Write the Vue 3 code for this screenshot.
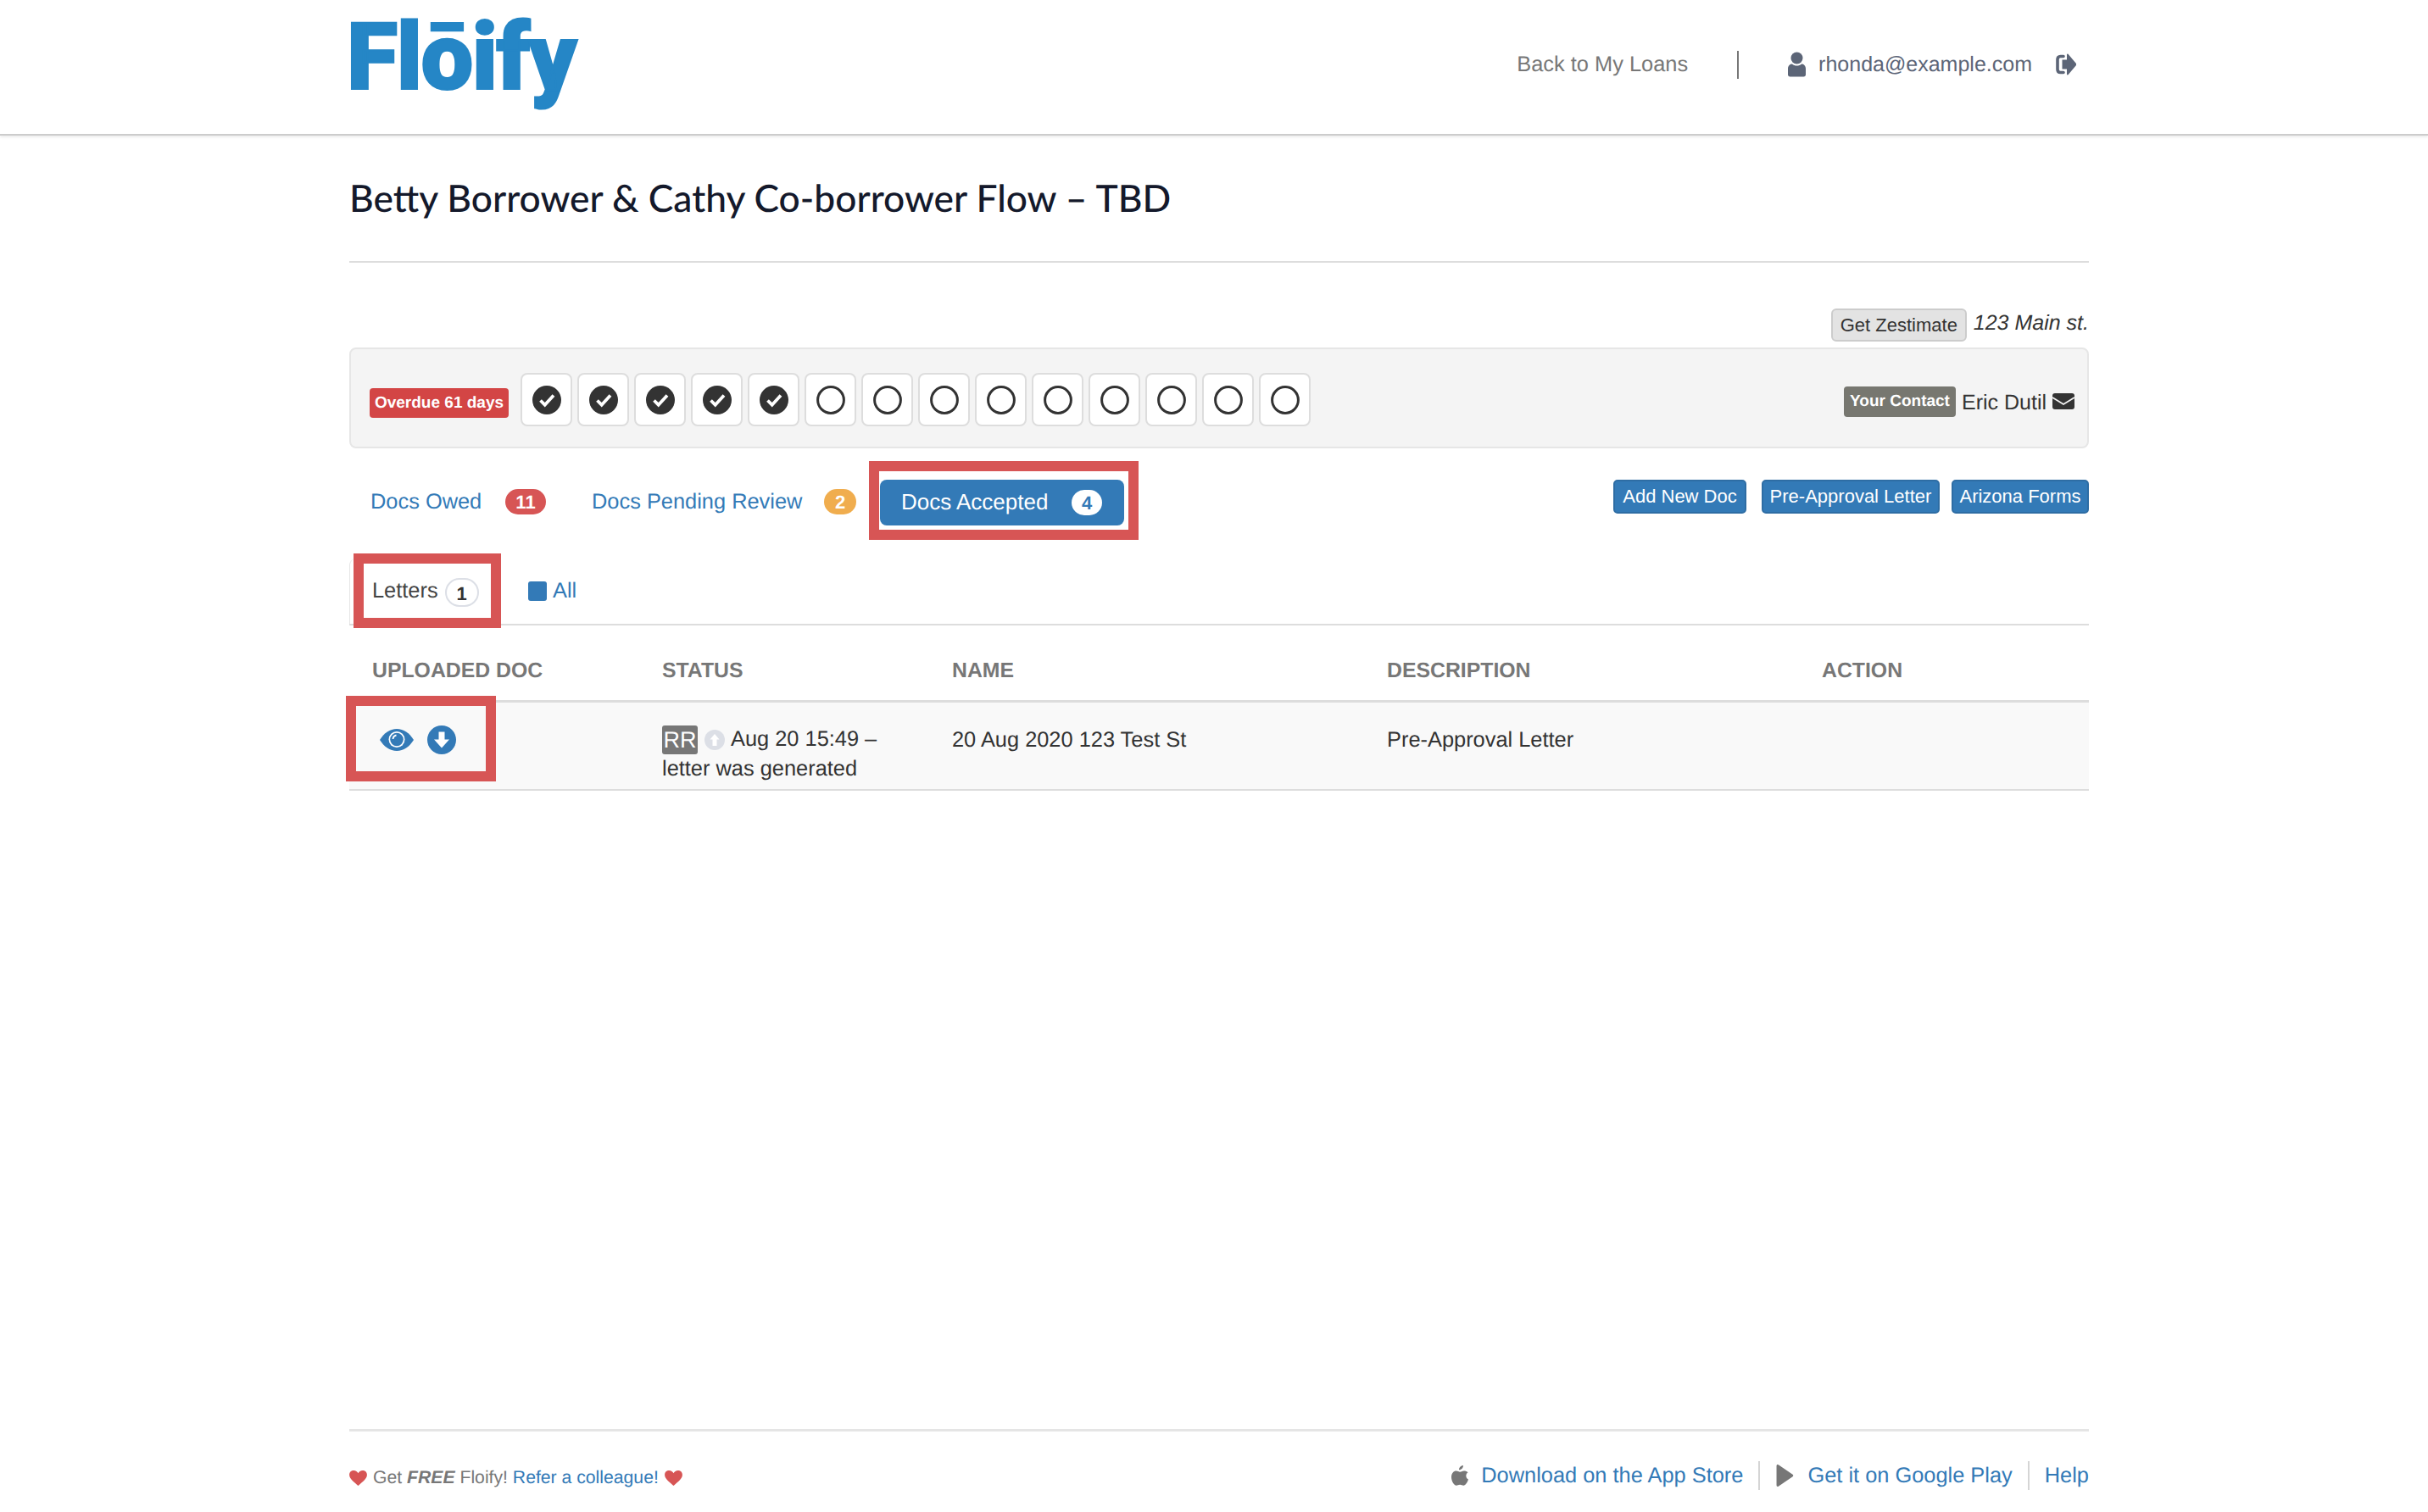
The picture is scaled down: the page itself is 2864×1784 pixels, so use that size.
<script setup>
const steps = Array.from({ length: 14 }, (_, i) => i < 5)
const tabs = [
  { label: 'Docs Owed', count: '11', tone: 'red' },
  { label: 'Docs Pending Review', count: '2', tone: 'orange' }
]
const actions = ['Add New Doc', 'Pre-Approval Letter', 'Arizona Forms']
</script>

<template>
  <div class="page">
    <header class="topbar">
      <div class="wrap topbar-inner">
        <span class="logo">Flōify</span>
        <nav class="topnav">
          <a class="back">Back to My Loans</a>
          <span class="nav-sep"></span>
          <svg class="user" viewBox="0 0 21 30"><circle cx="10.5" cy="7.500" r="7" fill="#5c6577"/><path d="M0 27V20c0-3.500 2.500-5.500 5-5.500 1.500 1.500 3.500 2 5.500 2s4-.5 5.500-2c2.500 0 5 2 5 5.500v7c0 1.500-1 2.500-2.500 2.500H2.500C1 29.500 0 28.500 0 27z" fill="#5c6577"/></svg>
          <span class="email">rhonda@example.com</span>
          <svg class="logout" viewBox="0 0 24 26"><path d="M9 3.500H5.500C3 3.500 2 5 2 7v12c0 2 1 3.500 3.500 3.500H9" fill="none" stroke="#5c6577" stroke-width="3.600" stroke-linecap="round"/><path d="M13 1.500c0-1 1-1.300 1.700-.6L24 12c.6.600.6 1.400 0 2L14.700 25.100c-.7.700-1.700.4-1.700-.6V18.500H7.500V7.500H13z" fill="#5c6577"/></svg>
        </nav>
      </div>
    </header>

    <main class="wrap">
      <h1 class="title">Betty Borrower &amp; Cathy Co-borrower Flow – TBD</h1>
      <hr class="rule" />

      <div class="address">
        <button class="zest">Get Zestimate</button>
        <em class="street">123 Main st.</em>
      </div>

      <section class="panel">
        <span class="overdue">Overdue 61 days</span>
        <ul class="steps">
          <li v-for="(done, i) in steps" :key="i" class="step">
            <svg viewBox="0 0 34 34" class="step-icon">
              <template v-if="done">
                <circle cx="17" cy="17" r="17" fill="#333"/>
                <path d="M9.500 17.500l5.200 5.200L25 11.500" fill="none" stroke="#fff" stroke-width="3.800"/>
              </template>
              <circle v-else cx="17" cy="17" r="15.400" fill="#fff" stroke="#333" stroke-width="3"/>
            </svg>
          </li>
        </ul>
        <div class="contact">
          <span class="contact-tag">Your Contact</span>
          <span class="contact-name">Eric Dutil</span>
          <svg class="mail" viewBox="0 0 26 19"><rect width="26" height="19" rx="3" fill="#333"/><path d="M0 5l13 8 13-8" fill="none" stroke="#f5f5f5" stroke-width="1.800"/></svg>
        </div>
      </section>

      <div class="docbar">
        <a v-for="t in tabs" :key="t.label" class="doctab">
          <span class="doctab-label">{{ t.label }}</span><span class="count" :class="t.tone">{{ t.count }}</span>
        </a>
        <div class="mark-accepted">
          <a class="pill"><span class="pill-label">Docs Accepted</span><span class="count white">4</span></a>
        </div>
        <div class="actions">
          <button v-for="a in actions" :key="a" class="action">{{ a }}</button>
        </div>
      </div>

      <div class="subtabs">
        <div class="subtab-edge">
          <div class="mark-letters">
            Letters<span class="count-outline">1</span>
          </div>
        </div>
        <a class="all"><span class="all-box"></span>All</a>
      </div>

      <table class="docs">
        <colgroup>
          <col class="c1" /><col class="c1" /><col class="c2" /><col class="c2" /><col class="c1" />
        </colgroup>
        <thead>
          <tr>
            <th>UPLOADED DOC</th><th>STATUS</th><th>NAME</th><th>DESCRIPTION</th><th>ACTION</th>
          </tr>
        </thead>
        <tbody>
          <tr>
            <td class="uploaded">
              <span class="mark-icons"></span>
              <span class="doc-icons">
                <svg class="eye" viewBox="0 0 40 26">
                  <path d="M0 13C5 5 12 0 20 0s15 5 20 13c-5 8-12 13-20 13S5 21 0 13z" fill="#337ab7"/>
                  <circle cx="20" cy="12.500" r="9.500" fill="#fff"/>
                  <circle cx="20" cy="12.500" r="7.800" fill="#337ab7"/>
                  <path d="M15.500 12a5 5 0 0 1 4-4.500" fill="none" stroke="#fff" stroke-width="1.800"/>
                </svg>
                <svg class="down" viewBox="0 0 34 34">
                  <circle cx="17" cy="17" r="17" fill="#337ab7"/>
                  <path d="M13.500 7.500h7v9H26L17 26.500 8 16.500h5.500z" fill="#fff"/>
                </svg>
              </span>
            </td>
            <td class="status">
              <div class="status-line">
                <span class="initials">RR</span>
                <svg class="up" viewBox="0 0 24 24"><circle cx="12" cy="12" r="12" fill="#dcdfe6"/><path d="M12 5l5.500 6.500H14.500V19h-5v-7.500H6.500z" fill="#fff"/></svg>
                <span>Aug 20 15:49 –</span>
              </div>
              <div>letter was generated</div>
            </td>
            <td>20 Aug 2020 123 Test St</td>
            <td>Pre-Approval Letter</td>
            <td></td>
          </tr>
        </tbody>
      </table>
    </main>

    <footer class="wrap footer">
      <div class="refer">
        <svg class="heart" viewBox="0 0 22 19"><path d="M11 19C8 16 0 11 0 5.500 0 2 2.500 0 5.500 0 8 0 10 1.500 11 3.500 12 1.500 14 0 16.500 0 19.500 0 22 2 22 5.500 22 11 14 16 11 19z" fill="#d75555"/></svg>
        <span>Get <b><i>FREE</i></b> Floify! <a>Refer a colleague!</a></span>
        <svg class="heart" viewBox="0 0 22 19"><path d="M11 19C8 16 0 11 0 5.500 0 2 2.500 0 5.500 0 8 0 10 1.500 11 3.500 12 1.500 14 0 16.500 0 19.500 0 22 2 22 5.500 22 11 14 16 11 19z" fill="#d75555"/></svg>
      </div>
      <div class="stores">
        <svg class="apple" viewBox="0 0 20 24"><path d="M14 0c.2 2.800-2.300 5.500-5 5.300C8.800 2.700 11.300.2 14 0zM19.600 8.200c-3.200 2-2.800 6.800.4 8.300-1 3-3.200 7.300-5.700 7.300-1.600 0-2.400-1-4.200-1s-2.700 1-4.200 1C3 23.800 0 18.500 0 13.800 0 9.200 2.800 6.500 5.700 6.500c1.800 0 3.200 1.200 4.400 1.200 1.100 0 2.700-1.300 4.800-1.300 1.800 0 3.500 .6 4.700 1.800z" fill="#777"/></svg>
        <a class="store-link">Download on the App Store</a>
        <span class="store-sep"></span>
        <svg class="play" viewBox="0 0 23 30"><path d="M0 2c0-2 1.500-2.500 3-1.300l19 13c1 .7 1 1.900 0 2.600l-19 13C1.500 30.500 0 30 0 28z" fill="#777"/></svg>
        <a class="store-link">Get it on Google Play</a>
        <span class="store-sep"></span>
        <a class="store-link">Help</a>
      </div>
    </footer>
  </div>
</template>

<style>
html, body { margin: 0; background: #fff; }
</style>

<style scoped>
* { box-sizing: border-box; }
.page {
  min-height: 100vh;
  display: flex;
  flex-direction: column;
  font-family: "Liberation Sans", Arial, sans-serif;
  font-size: 25.4px;
  color: #333;
  text-rendering: geometricPrecision;
}
.wrap { width: 2052px; margin-left: 412px; }

.topbar {
  height: 160px;
  border-bottom: 2px solid #ccc;
  box-shadow: 0 2px 3px rgba(0, 0, 0, .08);
}
.topbar-inner { height: 158px; display: flex; justify-content: space-between; }
.logo {
  align-self: flex-start;
  margin-left: -3px;
  font-family: Roboto, sans-serif;
  font-weight: 900;
  font-size: 110px;
  line-height: 136px;
  letter-spacing: -1.5px;
  color: #2586c6;
  -webkit-text-stroke: 2px #2586c6;
}
.topnav { display: flex; align-items: center; padding-right: 15px; height: 152px; }
.back { color: #777; }
.nav-sep { width: 2px; height: 33px; background: #777; margin: 0 58px 0 58px; }
.user { width: 21px; height: 30px; margin-right: 15px; }
.email { color: #5c6577; font-size: 25px; }
.logout { width: 24px; height: 26px; margin-left: 28px; }

.title {
  margin: 0;
  height: 148px;
  padding-bottom: 2px;
  display: flex;
  align-items: center;
  font-family: Lato, sans-serif;
  font-weight: 500;
  font-size: 44.3px;
  color: #14192b;
}
.rule { margin: 0; border: 0; height: 2px; background: #ddd; }

.address {
  margin-top: 54px;
  display: flex;
  justify-content: flex-end;
  align-items: flex-start;
  gap: 8px;
  height: 39px;
}
.zest {
  width: 160px;
  height: 39px;
  padding: 0;
  background: #e3e3e3;
  border: 2px solid #ccc;
  border-radius: 6px;
  font: 22px "Liberation Sans", Arial, sans-serif;
  color: #333;
}
.street { line-height: 34px; font-size: 25px; }

.panel {
  margin-top: 7px;
  height: 119px;
  padding: 4px 15px 0 22px;
  display: flex;
  align-items: center;
  background: #f4f4f4;
  border: 2px solid #e6e6e6;
  border-radius: 8px;
}
.overdue {
  width: 164px;
  height: 35px;
  margin-top: 7px;
  background: #d34545;
  border-radius: 4px;
  color: #fff;
  font-weight: 700;
  font-size: 19px;
  line-height: 35px;
  text-align: center;
}
.steps { list-style: none; margin: 0 0 0 14px; padding: 0; display: flex; gap: 6px; }
.step {
  width: 61px;
  height: 63px;
  display: flex;
  align-items: center;
  justify-content: center;
  background: #fff;
  border: 2px solid #ddd;
  border-radius: 8px;
}
.step-icon { width: 34px; height: 34px; }
.contact { margin-left: auto; display: flex; align-items: center; margin-top: 4px; }
.contact-tag {
  width: 132px;
  height: 36px;
  background: #777770;
  border-radius: 4px;
  color: #fff;
  font-weight: 700;
  font-size: 19px;
  line-height: 35px;
  text-align: center;
}
.contact-name { margin-left: 7px; font-size: 25px; line-height: 30px; margin-top: 2px; }
.mail { width: 26px; height: 19px; margin-left: 7px; }

.docbar {
  margin-top: 15px;
  height: 93px;
  display: flex;
  align-items: center;
}
.doctab { display: flex; align-items: center; color: #337ab7; margin-top: 3px; }
.doctab-label { margin-left: 25px; width: 159px; }
.doctab:nth-child(2) { margin-left: 29px; margin-right: 15px; }
.doctab:nth-child(2) .doctab-label { width: 274px; }
.count {
  height: 30px;
  border-radius: 15px;
  font-size: 22px;
  font-weight: 700;
  line-height: 32px;
  text-align: center;
  color: #fff;
}
.count.red { width: 48px; background: #d75555; }
.count.orange { width: 38px; background: #f0ad4e; }
.count.white { width: 36px; background: #fff; color: #337ab7; }
.mark-accepted {
  width: 318px;
  height: 93px;
  padding: 10px 5px 5px 1px;
  border: 12px solid #d75555;
}
.pill {
  height: 54px;
  display: flex;
  align-items: center;
  padding-left: 25px;
  background: #337ab7;
  border-radius: 8px;
  color: #fff;
}
.pill-label { width: 201px; margin-bottom: 2px; font-size: 26px; }
.actions { margin-left: auto; display: flex; align-self: flex-start; margin-top: 22px; gap: 14px; }
.action {
  height: 40px;
  padding: 0;
  white-space: nowrap;
  background: #337ab7;
  border: 2px solid #2e6da4;
  border-radius: 5px;
  color: #fff;
  font: 22px "Liberation Sans", Arial, sans-serif;
}
.action:first-child { width: 157px; margin-right: 4px; }
.action:nth-child(2) { width: 210px; }
.action:nth-child(3) { width: 162px; }

.subtabs {
  height: 101px;
  border-bottom: 2px solid #ddd;
  display: flex;
  align-items: flex-start;
}
.subtab-edge {
  margin-top: 22px;
  height: 77px;
  padding-left: 4px;
  border-left: 1px solid #e6e6e6;
  border-top-left-radius: 8px;
}
.mark-letters {
  width: 174px;
  height: 88px;
  margin-top: -6px;
  padding: 0 0 0 10px;
  border: 12px solid #d75555;
  display: flex;
  align-items: center;
  position: relative;
  color: #444;
}
.count-outline {
  width: 40px;
  height: 34px;
  margin-left: 8px;
  margin-top: 4px;
  border: 2px solid #dcdfe6;
  border-radius: 17px;
  background: #fff;
  font-size: 22px;
  font-weight: 700;
  line-height: 34px;
  text-align: center;
  color: #333;
}
.all {
  margin: 46px 0 0 32px;
  display: flex;
  align-items: center;
  color: #337ab7;
}
.all-box {
  width: 22px;
  height: 23px;
  margin-right: 7px;
  background: #337ab7;
  border-radius: 3px;
}

.docs { width: 100%; table-layout: fixed; border-collapse: collapse; }
.c1 { width: 342px; }
.c2 { width: 513px; }
.docs th {
  height: 89px;
  padding: 0 27px 19px;
  vertical-align: bottom;
  text-align: left;
  font-size: 24.8px;
  font-weight: 700;
  line-height: 30px;
  color: #777;
  border-bottom: 3px solid #ddd;
}
.docs td {
  height: 105px;
  padding: 27px 27px 5px;
  vertical-align: top;
  line-height: 35px;
  background: #f9f9f9;
  border-bottom: 2px solid #ddd;
}
.docs td.status { padding-top: 25px; }
.status-line { display: flex; align-items: center; height: 36px; padding-top: 2px; }
.uploaded { position: relative; }
.mark-icons {
  position: absolute;
  left: -4px;
  top: -8px;
  width: 177px;
  height: 101px;
  border: 12px solid #d75555;
}
.docs td.uploaded { padding-top: 25px; }
.doc-icons { display: flex; align-items: center; gap: 16px; margin: 2px 0 0 9px; position: relative; }
.eye { width: 40px; height: 26px; }
.down { width: 34px; height: 34px; }
.initials {
  width: 42px;
  height: 34px;
  background: #777;
  border-radius: 3px;
  color: #fff;
  font-size: 27px;
  line-height: 35px;
  text-align: center;
}
.up { width: 24px; height: 24px; margin: 0 7px 0 8px; }

.footer {
  margin-top: auto;
  height: 98px;
  border-top: 3px solid #e5e5e5;
  display: flex;
  justify-content: space-between;
  align-items: center;
  padding-top: 9px;
}
.refer { display: flex; align-items: center; gap: 7px; font-size: 21.2px; color: #777; margin-top: 5px; }
.refer a { color: #337ab7; }
.heart { width: 21px; height: 18px; }
.stores { display: flex; align-items: center; }
.store-link { color: #337ab7; }
.store-sep { width: 2px; height: 34px; margin: 0 18px; background: #d5d5d5; }
.apple { width: 20px; height: 24px; margin-right: 15px; }
.play { width: 23px; height: 26px; margin-right: 15px; }
</style>
